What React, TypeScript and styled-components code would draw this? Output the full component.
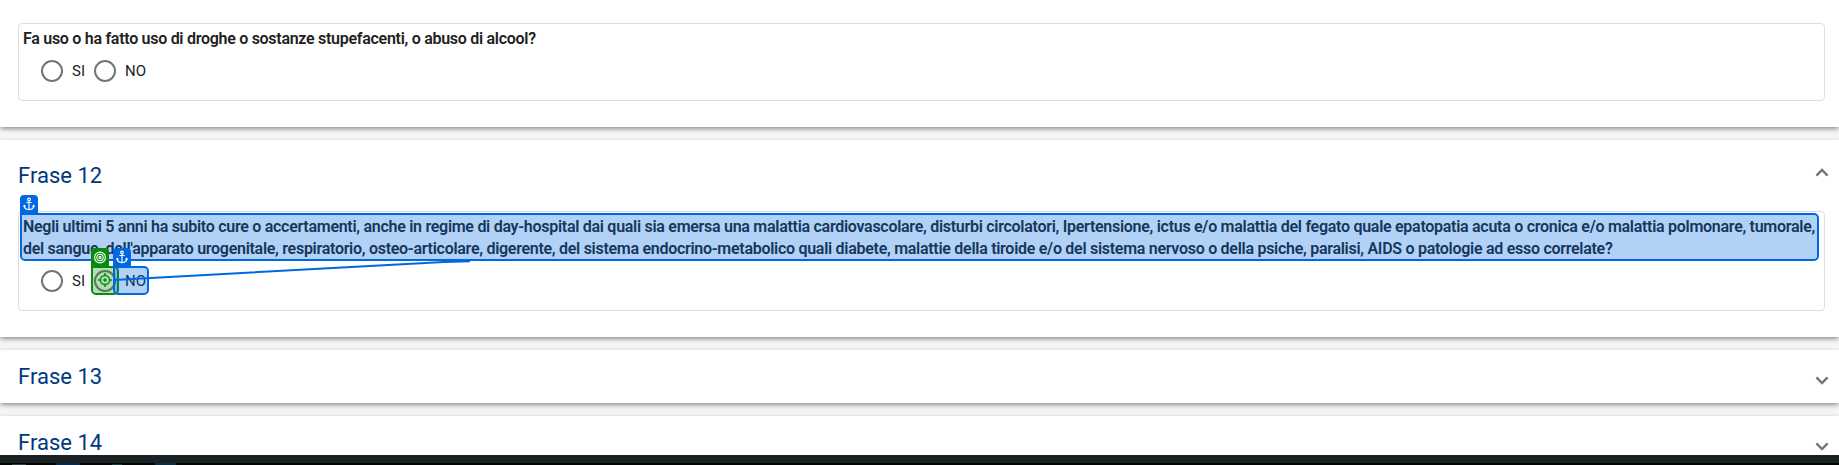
import React from 'react';
import styled, { createGlobalStyle } from 'styled-components';

const GlobalStyle = createGlobalStyle`
  * { box-sizing: border-box; }
  body {
    margin: 0;
    background: #f5f5f5;
    font-family: Roboto, 'Liberation Sans', sans-serif;
    overflow: hidden;
  }
`;

const Page = styled.main`
  position: relative;
  display: flex;
  flex-direction: column;
  height: 465px;
  overflow: hidden;
`;

const Accordion = styled.div`
  display: flex;
  flex-direction: column;
  flex: 1;
  min-height: 0;
  gap: 13px;
  overflow: hidden;
`;

const Card = styled.section<{ $height: number }>`
  flex: none;
  height: ${(p) => p.$height}px;
  padding: 0 14px 0 18px;
  background: #fff;
  box-shadow: 0 3px 5px -1px rgba(0, 0, 0, 0.3), 0 1px 4px 0 rgba(0, 0, 0, 0.2);
`;

const CardHeader = styled.header<{ $height: number }>`
  display: flex;
  align-items: center;
  justify-content: space-between;
  height: ${(p) => p.$height}px;
  margin-right: -4px;
`;

const Title = styled.h2`
  margin: 0;
  color: #003781;
  font-size: 22px;
  font-weight: 400;
  line-height: 24px;
  letter-spacing: 0.02px;
`;

const Chevron = styled.svg<{ $shift: number }>`
  display: block;
  width: 14px;
  height: 9px;
  margin-top: ${(p) => p.$shift}px;
  fill: none;
  stroke: #757575;
  stroke-width: 2.4;
`;

const Panel = styled.div<{ $height: number }>`
  height: ${(p) => p.$height}px;
  padding: 4px;
  border: 1px solid #dedede;
  border-radius: 4px;
`;

const Question = styled.p`
  margin: 0;
  color: #212121;
  font-size: 16px;
  font-weight: 600;
  line-height: 22px;
  letter-spacing: -0.283px;
  white-space: nowrap;
`;

const Options = styled.div`
  display: flex;
  align-items: center;
  height: 22px;
  margin: 10px 0 0 18px;
`;

const Option = styled.label`
  display: flex;
  align-items: center;
  width: 53px;
  gap: 9px;
  color: #212121;
  font-size: 15px;
  font-weight: 400;
  line-height: 22px;
  letter-spacing: 0.15px;
`;

const Radio = styled.span`
  width: 22px;
  height: 22px;
  border: 2px solid #757575;
  border-radius: 50%;
`;

const BottomBar = styled.footer`
  display: flex;
  flex: none;
  align-items: flex-end;
  height: 10px;
  padding-left: 12px;
  background: linear-gradient(#1b2224 0 8px, #030505 8px);
`;

const Glint = styled.i<{ $color: string; $width: number; $gap: number }>`
  width: ${(p) => p.$width}px;
  height: ${(p) => (p.$width > 20 ? 2 : 1)}px;
  margin-right: ${(p) => p.$gap}px;
  background: ${(p) => p.$color};
`;

type Tone = 'blue' | 'green';
const tones = {
  blue: { line: '#0068e0', fill: 'rgba(0, 104, 224, 0.3)' },
  green: { line: '#078c0d', fill: 'rgba(7, 140, 13, 0.3)' },
};

const Marker = styled.div<{ $tone: Tone; $x: number; $y: number; $w: number; $h: number }>`
  position: absolute;
  left: ${(p) => p.$x}px;
  top: ${(p) => p.$y}px;
  width: ${(p) => p.$w}px;
  height: ${(p) => p.$h}px;
  border: 2px solid ${(p) => tones[p.$tone].line};
  border-radius: 0 5px 5px 5px;
  background: ${(p) => tones[p.$tone].fill};
  background-clip: padding-box;
`;

const MarkerTag = styled.span<{ $tone: Tone }>`
  position: absolute;
  left: -2px;
  bottom: 100%;
  display: flex;
  align-items: center;
  justify-content: center;
  width: 18px;
  height: 20px;
  border-radius: 4px 4px 0 0;
  background: ${(p) => tones[p.$tone].line};
`;

const TagIcon = styled.svg`
  width: 12px;
  height: 14px;
  margin-bottom: 2px;
  fill: none;
  stroke: #fff;
  stroke-width: 1.1;
`;

const LinkLayer = styled.svg`
  position: absolute;
  left: 0;
  top: 0;
  pointer-events: none;
`;

const AnchorIcon = () => (
  <TagIcon viewBox="0 0 12 14">
    <circle cx="6" cy="2.4" r="1.3" />
    <path d="M6 3.8V12.6M3.4 5.5H8.6M1.2 8.6C1.2 11.2 3.3 12.6 6 12.6S10.8 11.2 10.8 8.6M.5 9.8L1.3 8.4L2.6 9.4M9.4 9.4L10.7 8.4L11.5 9.8" />
  </TagIcon>
);

const RingsIcon = () => (
  <TagIcon viewBox="0 0 12 14">
    <circle cx="6" cy="7.5" r="5.4" />
    <circle cx="6" cy="7.5" r="3.2" />
    <circle cx="6" cy="7.5" r="1.1" />
  </TagIcon>
);

const RadioOptions = () => (
  <Options>
    <Option><Radio />SI</Option>
    <Option><Radio />NO</Option>
  </Options>
);

const Collapse = () => (
  <Chevron $shift={-6} viewBox="0 0 14 9"><path d="M1.4 7.6L7 2L12.6 7.6" /></Chevron>
);
const Expand = () => (
  <Chevron $shift={8} viewBox="0 0 14 9"><path d="M1.4 1.4L7 7L12.6 1.4" /></Chevron>
);

export default function App() {
  return (
    <>
      <GlobalStyle />
      <Page>
        <Accordion>
          <Card $height={127}>
            <CardHeader $height={23} />
            <Panel $height={78}>
              <Question>Fa uso o ha fatto uso di droghe o sostanze stupefacenti, o abuso di alcool?</Question>
              <RadioOptions />
            </Panel>
          </Card>
          <Card $height={197}>
            <CardHeader $height={71}>
              <Title>Frase 12</Title>
              <Collapse />
            </CardHeader>
            <Panel $height={100}>
              <Question>
                Negli ultimi 5 anni ha subito cure o accertamenti, anche in regime di day-hospital dai quali sia emersa una malattia cardiovascolare, disturbi circolatori, Ipertensione, ictus e/o malattia del fegato quale epatopatia acuta o cronica e/o malattia polmonare, tumorale,
                <br />
                del sangue, dell'apparato urogenitale, respiratorio, osteo-articolare, digerente, del sistema endocrino-metabolico quali diabete, malattie della tiroide e/o del sistema nervoso o della psiche, paralisi, AIDS o patologie ad esso correlate?
              </Question>
              <RadioOptions />
            </Panel>
          </Card>
          <Card $height={53}>
            <CardHeader $height={53}>
              <Title>Frase 13</Title>
              <Expand />
            </CardHeader>
          </Card>
          <Card $height={53}>
            <CardHeader $height={53}>
              <Title>Frase 14</Title>
              <Expand />
            </CardHeader>
          </Card>
        </Accordion>
        <BottomBar>
          <Glint $width={14} $gap={30} $color="#303b3e" />
          <Glint $width={24} $gap={32} $color="#062a50" />
          <Glint $width={10} $gap={33} $color="#17383b" />
          <Glint $width={21} $gap={0} $color="#082f42" />
        </BottomBar>
        <Marker $tone="blue" $x={20} $y={213} $w={1799} $h={48}>
          <MarkerTag $tone="blue"><AnchorIcon /></MarkerTag>
        </Marker>
        <Marker $tone="green" $x={91} $y={266} $w={28} $h={29}>
          <MarkerTag $tone="green"><RingsIcon /></MarkerTag>
        </Marker>
        <Marker $tone="blue" $x={113} $y={266} $w={36} $h={29}>
          <MarkerTag $tone="blue"><AnchorIcon /></MarkerTag>
        </Marker>
        <LinkLayer width="480" height="310" viewBox="0 0 480 310" fill="none">
          <path d="M114 280L444 262L470 261.3" stroke="#0068e0" strokeWidth="2" />
          <circle cx="105" cy="280" r="4.6" stroke="#078c0d" strokeWidth="1.5" />
          <circle cx="105" cy="280" r="1.7" fill="#078c0d" />
          <path d="M105 273V276M105 284V287M98 280H101M109 280H112" stroke="#078c0d" strokeWidth="1.5" />
        </LinkLayer>
      </Page>
    </>
  );
}
